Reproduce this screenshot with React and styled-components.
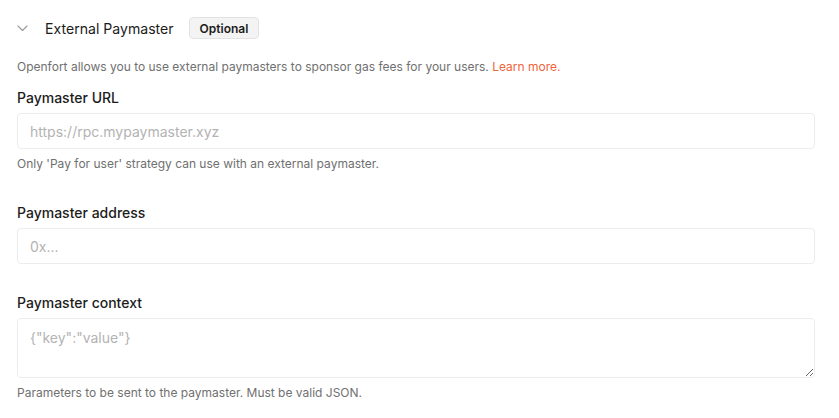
import React from 'react';
import styled, { createGlobalStyle } from 'styled-components';

const GlobalStyle = createGlobalStyle`
  html, body {
    margin: 0;
    padding: 0;
    background: #ffffff;
    font-family: Inter, "Noto Sans", sans-serif;
    -webkit-font-smoothing: antialiased;
  }
  * {
    box-sizing: border-box;
  }
`;

function App() {
  return (
    <>
      <GlobalStyle />
      <StPage>
        <StHeader>
          <StChevron width="11" height="7" viewBox="0 0 11 7" fill="none">
            <path d="M1 1l4.5 4.5L10 1" stroke="#9a9a9a" strokeWidth="1.1" strokeLinecap="round" strokeLinejoin="round" />
          </StChevron>
          <StTitle>External Paymaster</StTitle>
          <StBadge>Optional</StBadge>
        </StHeader>

        <StDesc>
          Openfort allows you to use external paymasters to sponsor gas fees for your users.{' '}
          <StLink href="#">Learn more.</StLink>
        </StDesc>

        <StFields>
          <StField>
            <StLabel>Paymaster URL</StLabel>
            <StInput placeholder="https://rpc.mypaymaster.xyz" />
            <StHelp>Only 'Pay for user' strategy can use with an external paymaster.</StHelp>
          </StField>

          <StField>
            <StLabel>Paymaster address</StLabel>
            <StInput placeholder="0x..." />
          </StField>

          <StField>
            <StLabel>Paymaster context</StLabel>
            <StTextarea placeholder={'{"key":"value"}'} />
            <StHelp>Parameters to be sent to the paymaster. Must be valid JSON.</StHelp>
          </StField>
        </StFields>
      </StPage>
    </>
  );
}

export default App;

const StPage = styled.div`
  width: 839px;
  padding: 17px 24px 0 17px;
`;

const StHeader = styled.div`
  display: flex;
  align-items: center;
  height: 22px;
`;

const StChevron = styled.svg`
  display: block;
  margin-right: 17px;
`;

const StTitle = styled.span`
  font-size: 14.1px;
  color: #1c1c1c;
  margin-right: 15px;
`;

const StBadge = styled.span`
  display: inline-flex;
  align-items: center;
  height: 22px;
  padding: 0 10px;
  font-size: 12px;
  font-weight: 600;
  color: #1c1c1c;
  background: #f3f3f3;
  border: 1px solid #e3e3e3;
  border-radius: 4px;
`;

const StDesc = styled.p`
  margin: 18px 0 0;
  font-size: 12px;
  line-height: 20px;
  color: #707070;
`;

const StLink = styled.a`
  color: #f0643a;
  text-decoration: none;
`;

const StFields = styled.div`
  display: flex;
  flex-direction: column;
  gap: 28px;
  margin-top: 10px;
`;

const StField = styled.div`
  display: flex;
  flex-direction: column;
`;

const StLabel = styled.label`
  font-size: 14px;
  line-height: 22px;
  font-weight: 500;
  color: #1c1c1c;
  margin-bottom: 4px;
`;

const StInput = styled.input`
  height: 36px;
  width: 100%;
  padding: 0 12px;
  font-family: inherit;
  font-size: 14px;
  color: #1c1c1c;
  background: #ffffff;
  border: 1px solid #ececec;
  border-radius: 4px;
  outline: none;

  &::placeholder {
    color: #b3b3b3;
  }
`;

const StTextarea = styled.textarea`
  height: 60px;
  width: 100%;
  padding: 9px 12px;
  font-family: inherit;
  font-size: 14px;
  line-height: 20px;
  color: #1c1c1c;
  background: #ffffff;
  border: 1px solid #ececec;
  border-radius: 4px;
  outline: none;
  resize: vertical;
  display: block;

  &::placeholder {
    color: #b3b3b3;
  }
`;

const StHelp = styled.p`
  margin: 5px 0 0;
  font-size: 12px;
  line-height: 20px;
  color: #707070;
`;
